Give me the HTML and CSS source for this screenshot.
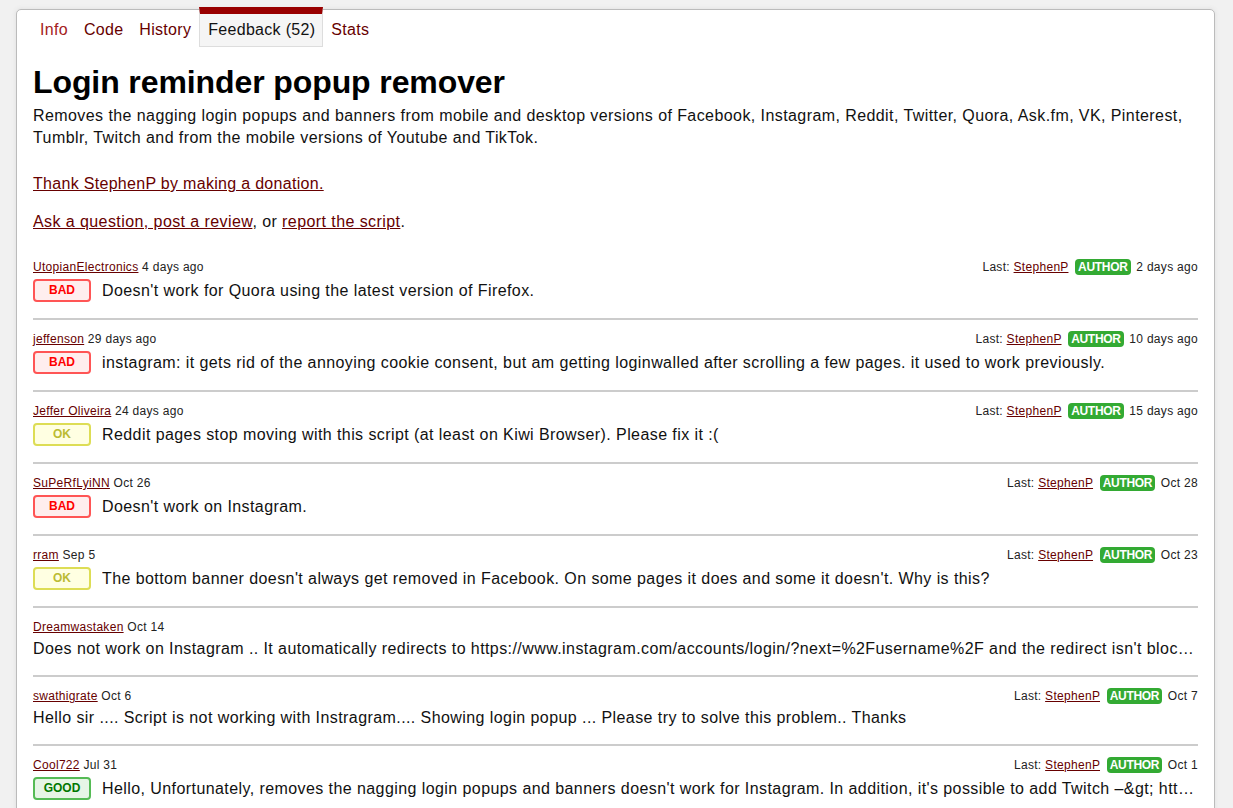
FILE: index.html
```html
<!DOCTYPE html>
<html lang="en">
<head>
<meta charset="utf-8">
<title>Login reminder popup remover - Feedback</title>
<link rel="stylesheet" href="styles.css">
</head>
<body>
<div class="card">
  <ul class="tabs">
    <li class="tab"><a class="visited" href="#">Info</a></li>
    <li class="tab"><a href="#">Code</a></li>
    <li class="tab"><a href="#">History</a></li>
    <li class="tab current">Feedback (52)</li>
    <li class="tab"><a href="#">Stats</a></li>
  </ul>

  <h2 class="title">Login reminder popup remover</h2>
  <p class="desc">Removes the nagging login popups and banners from mobile and desktop versions of Facebook, Instagram, Reddit, Twitter, Quora, Ask.fm, VK, Pinterest, Tumblr, Twitch and from the mobile versions of Youtube and TikTok.</p>
  <p class="donate"><a href="#">Thank StephenP by making a donation.</a></p>
  <p class="ask"><a href="#">Ask a question, post a review</a>, or <a href="#">report the script</a>.</p>

  <div class="list">
    <div class="item">
      <div class="meta"><span><a href="#">UtopianElectronics</a> 4 days ago</span><span>Last: <a href="#">StephenP</a> <span class="author">AUTHOR</span> 2 days ago</span></div>
      <div class="row"><span class="rating bad">BAD</span><span class="text">Doesn't work for Quora using the latest version of Firefox.</span></div>
    </div>
    <div class="item">
      <div class="meta"><span><a href="#">jeffenson</a> 29 days ago</span><span>Last: <a href="#">StephenP</a> <span class="author">AUTHOR</span> 10 days ago</span></div>
      <div class="row"><span class="rating bad">BAD</span><span class="text">instagram: it gets rid of the annoying cookie consent, but am getting loginwalled after scrolling a few pages. it used to work previously.</span></div>
    </div>
    <div class="item">
      <div class="meta"><span><a href="#">Jeffer Oliveira</a> 24 days ago</span><span>Last: <a href="#">StephenP</a> <span class="author">AUTHOR</span> 15 days ago</span></div>
      <div class="row"><span class="rating ok">OK</span><span class="text">Reddit pages stop moving with this script (at least on Kiwi Browser). Please fix it :(</span></div>
    </div>
    <div class="item">
      <div class="meta"><span><a href="#">SuPeRfLyiNN</a> Oct 26</span><span>Last: <a href="#">StephenP</a> <span class="author">AUTHOR</span> Oct 28</span></div>
      <div class="row"><span class="rating bad">BAD</span><span class="text">Doesn't work on Instagram.</span></div>
    </div>
    <div class="item">
      <div class="meta"><span><a href="#">rram</a> Sep 5</span><span>Last: <a href="#">StephenP</a> <span class="author">AUTHOR</span> Oct 23</span></div>
      <div class="row"><span class="rating ok">OK</span><span class="text">The bottom banner doesn't always get removed in Facebook. On some pages it does and some it doesn't. Why is this?</span></div>
    </div>
    <div class="item">
      <div class="meta"><span><a href="#">Dreamwastaken</a> Oct 14</span></div>
      <div class="row"><span class="text">Does not work on Instagram .. It automatically redirects to https://www.instagram.com/accounts/login/?next=%2Fusername%2F and the redirect isn't blocked by the script.</span></div>
    </div>
    <div class="item">
      <div class="meta"><span><a href="#">swathigrate</a> Oct 6</span><span>Last: <a href="#">StephenP</a> <span class="author">AUTHOR</span> Oct 7</span></div>
      <div class="row"><span class="text">Hello sir .... Script is not working with Instragram.... Showing login popup ... Please try to solve this problem.. Thanks</span></div>
    </div>
    <div class="item">
      <div class="meta"><span><a href="#">Cool722</a> Jul 31</span><span>Last: <a href="#">StephenP</a> <span class="author">AUTHOR</span> Oct 1</span></div>
      <div class="row"><span class="rating good">GOOD</span><span class="text">Hello, Unfortunately, removes the nagging login popups and banners doesn't work for Instagram. In addition, it's possible to add Twitch –&amp;gt; https://www.twitch.tv and others to the list?</span></div>
    </div>
    <div class="item">
      <div class="meta"><span><a href="#">anonymous</a> Jul 20</span></div>
      <div class="row"><span class="text">Thanks for the script.</span></div>
    </div>
  </div>
</div>
</body>
</html>
```
FILE: styles.css
```css
html {
  overflow: hidden;
}

body {
  margin: 0;
  background: #f1f1f1;
  font-family: "Liberation Sans", Arial, sans-serif;
  color: #111;
  letter-spacing: 0.3px;
}

a {
  color: #670000;
  text-decoration: underline;
}

a.visited {
  color: #a42121;
  text-decoration: none;
}

.card {
  margin: 9px 18px 0 16px;
  background: #fff;
  border: 1px solid #bbb;
  border-radius: 5px;
  box-shadow: 0 0 5px #ddd;
  padding: 0 16px 16px;
}

.tabs {
  display: flex;
  list-style: none;
  margin: -3px 0 0 -1px;
  padding: 0;
  font-size: 16px;
}

.tab {
  box-sizing: border-box;
  height: 40px;
  padding: 7px 8px 0;
  line-height: 32px;
}

.tab a {
  text-decoration: none;
}

.tab.current {
  padding: 0 7px 0 8px;
  background: #f5f5f5;
  border: 1px solid #ddd;
  border-top: 7px solid #990000;
  color: #111;
}

.title {
  margin: 16px 0 0;
  font-size: 32px;
  line-height: 38px;
  font-weight: bold;
  letter-spacing: -0.1px;
  color: #000;
}

.desc,
.donate,
.ask {
  font-size: 16px;
  line-height: 22px;
  letter-spacing: 0.42px;
}

.desc {
  margin: 4px 0 24px;
}

.donate {
  margin: 0 0 16px;
  letter-spacing: 0.3px;
}

.ask {
  margin: 0 0 15px;
}

.item {
  padding: 11px 0 16px;
  border-bottom: 2px solid #ccc;
}

.meta {
  display: flex;
  justify-content: space-between;
  font-size: 12px;
  line-height: 16px;
  height: 16px;
  color: #222;
}

.author {
  display: inline-block;
  vertical-align: top;
  height: 16px;
  line-height: 16px;
  padding: 0 3px;
  margin: 0 2px 0 3px;
  border-radius: 4px;
  background: #3a3;
  color: #fff;
  font-weight: bold;
  letter-spacing: -0.3px;
}

.row {
  display: flex;
  align-items: center;
  margin-top: 4px;
  min-height: 20px;
  font-size: 16px;
  line-height: 20px;
  letter-spacing: 0.42px;
}

.rating {
  flex: none;
  box-sizing: border-box;
  width: 58px;
  height: 23px;
  margin-right: 11px;
  border: 2px solid;
  border-radius: 4px;
  font-size: 12px;
  line-height: 19px;
  font-weight: bold;
  text-align: center;
  letter-spacing: 0;
}

.rating.bad {
  border-color: #f55;
  background: #fee;
  color: #f00;
}

.rating.ok {
  border-color: #dd5;
  background: #ffffe2;
  color: #bb3;
}

.rating.good {
  border-color: #5b5;
  background: #e6f5e6;
  color: #070;
}

.text {
  flex: 1;
  min-width: 0;
  white-space: nowrap;
  overflow: hidden;
  text-overflow: ellipsis;
}
```
